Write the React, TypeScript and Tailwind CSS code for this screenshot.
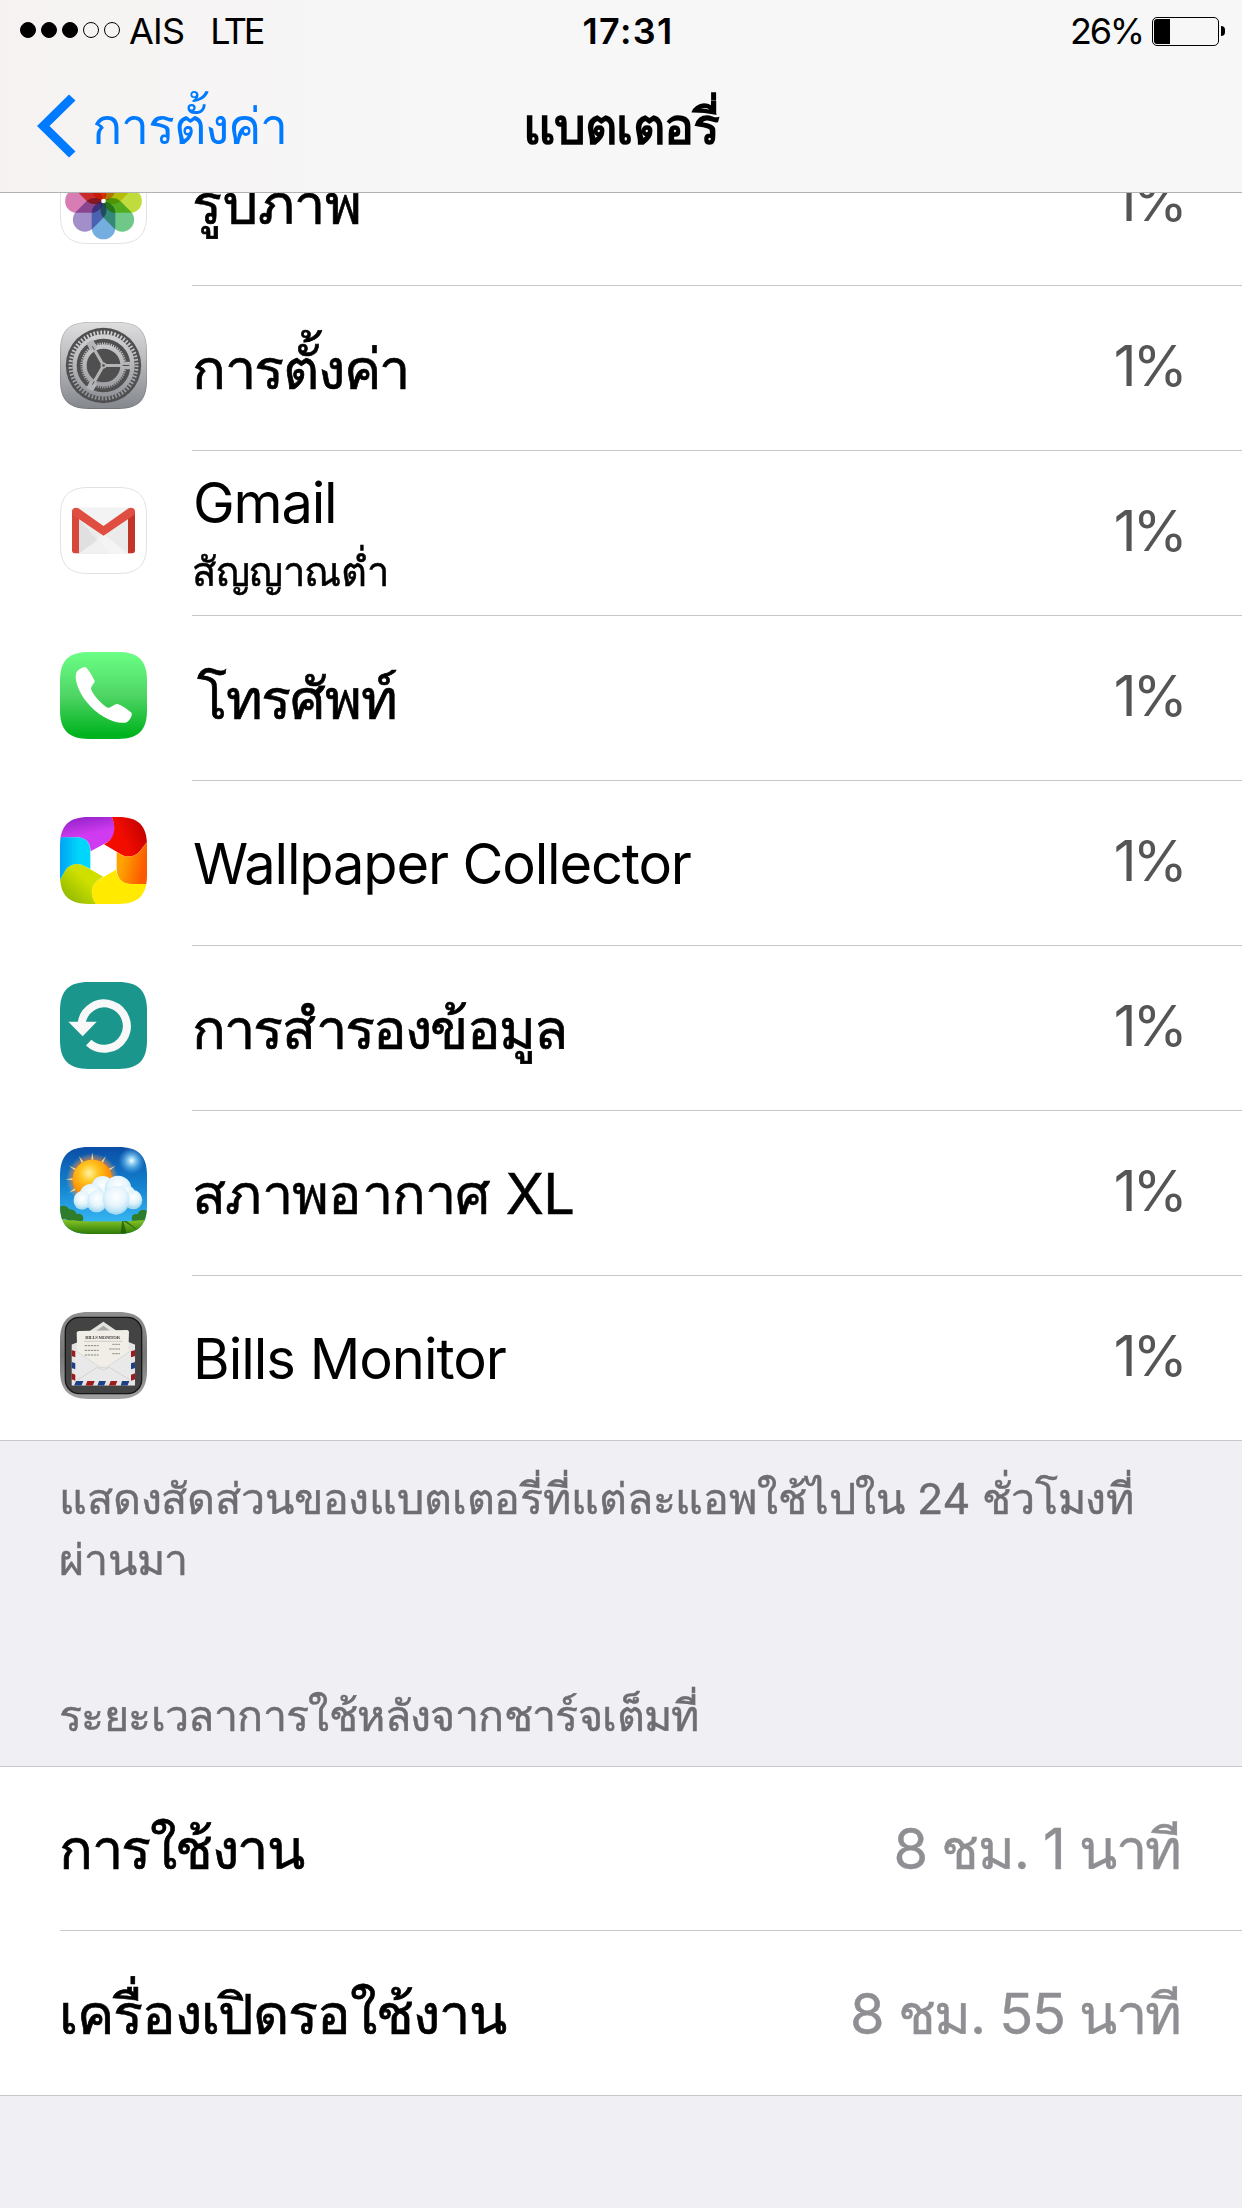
import React from 'react';

interface AppUsage {
  name: string;
  nameClass: string;
  note?: string;
  percent: string;
  icon: React.ReactNode;
}

interface IconProps {
  id: string;
  children: React.ReactNode;
  outlined?: boolean;
}

// Shared rounded app tile, everything inside is clipped to its shape
const AppIcon: React.FC<IconProps> = ({ id, children, outlined }) => (
  <svg className="w-[87px] h-[87px] shrink-0" viewBox="0 0 261 261">
    <clipPath id={`${id}-clip`}>
      <path d="M0 86C0 26 26 0 86 0H175C235 0 261 26 261 86V175C261 235 235 261 175 261H86C26 261 0 235 0 175Z" />
    </clipPath>
    <g clipPath={`url(#${id}-clip)`}>{children}</g>
    {outlined && (
      <path
        d="M1.5 86C1.5 27 27 1.5 86 1.5H175C234 1.5 259.5 27 259.5 86V175C259.5 234 234 259.5 175 259.5H86C27 259.5 1.5 234 1.5 175Z"
        fill="none"
        stroke="#e2e2e2"
        strokeWidth="3"
      />
    )}
  </svg>
);

const PETALS = ['#f9a01e', '#f0dc28', '#bfdc3c', '#6fc788', '#74aee0', '#a28fc9', '#d87db4', '#f0563c'];

const PhotosIcon = () => (
  <AppIcon id="photos" outlined>
    <rect width="261" height="261" fill="#fff" />
    <g style={{ isolation: 'isolate' }}>
      {PETALS.map((color, i) => (
        <rect
          key={color}
          x="95"
          y="17"
          width="71"
          height="113"
          rx="35"
          fill={color}
          transform={`rotate(${i * 45} 130.5 132)`}
          style={{ mixBlendMode: 'multiply' }}
        />
      ))}
    </g>
    <circle cx="130.5" cy="132" r="7" fill="#fff" />
  </AppIcon>
);

const SettingsIcon = () => (
  <AppIcon id="settings">
    <linearGradient id="settings-bg" x1="0" y1="0" x2="0" y2="261" gradientUnits="userSpaceOnUse">
      <stop offset="0" stopColor="#dededf" />
      <stop offset="0.45" stopColor="#b9b9bc" />
      <stop offset="1" stopColor="#83878d" />
    </linearGradient>
    <rect width="261" height="261" fill="url(#settings-bg)" />
    <circle cx="130.5" cy="130.5" r="113" fill="#4f4f50" />
    <g fill="none" stroke="url(#settings-bg)">
      <circle cx="130.5" cy="130.5" r="99" strokeWidth="12" strokeDasharray="5.184 5.184" />
      <circle cx="130.5" cy="130.5" r="87" strokeWidth="13" />
      <circle cx="130.5" cy="130.5" r="66" strokeWidth="6" strokeDasharray="3.456 3.456" />
      <circle cx="130.5" cy="130.5" r="57" strokeWidth="13" />
    </g>
    <g stroke="#b4b4b7" strokeWidth="9">
      <path d="M130.5 130.5H212" />
      <path d="M130.5 130.5L90 60" />
      <path d="M130.5 130.5L90 201" />
    </g>
    <g fill="#b4b4b7">
      <path d="M188 119H214V142H188Z" />
      <path d="M92 87L79 64L99 53L112 76Z" />
      <path d="M92 174L79 197L99 208L112 185Z" />
    </g>
    <path d="M188 130.5H208M97 73L103 83M97 188L103 178" stroke="#4f4f50" strokeWidth="3" />
    <circle cx="130.5" cy="130.5" r="9" fill="#b4b4b7" />
    <circle cx="130.5" cy="130.5" r="4" fill="#4f4f50" />
    <path
      d="M1 86C1 27 27 1 86 1H175C234 1 260 27 260 86V175C260 234 234 260 175 260H86C27 260 1 234 1 175Z"
      fill="none"
      stroke="#000"
      strokeOpacity="0.15"
      strokeWidth="3"
    />
  </AppIcon>
);

const GmailIcon = () => (
  <AppIcon id="gmail" outlined>
    <rect width="261" height="261" fill="#fff" />
    <rect x="50" y="62" width="162" height="138" fill="#ebebeb" />
    <path d="M57 62H204L130.5 118Z" fill="#f3f3f3" />
    <path d="M57 200L130 140L204 200Z" fill="#f4f4f4" />
    <path d="M57 98L150 200H57Z" fill="#d9d9d9" opacity="0.6" />
    <path d="M57 200L118 155L150 200Z" fill="#f1f1f1" />
    <path d="M36 76H57V199H44C39 199 36 196 36 190Z" fill="#d9463a" />
    <path d="M204 76H225V190C225 196 222 199 217 199H204Z" fill="#c1352a" />
    <path d="M36 74C36 62 48 60 55 64L130.5 117L206 64C213 60 225 62 225 74C225 79 223 83 219 86L130.5 146L42 86C38 83 36 79 36 74Z" fill="#e04e42" />
  </AppIcon>
);

const PhoneIcon = () => (
  <AppIcon id="phone">
    <linearGradient id="phone-bg" x1="0" y1="0" x2="0" y2="1">
      <stop offset="0" stopColor="#6bff85" />
      <stop offset="0.5" stopColor="#4fd565" />
      <stop offset="0.95" stopColor="#01b31f" />
    </linearGradient>
    <rect width="261" height="261" fill="url(#phone-bg)" />
    <path
      d="M49 62C54 52 70 44 77 46C86 53 98 74 104 87C105 93 92 102 93 111C98 128 125 157 143 167C150 170 163 155 173 156C186 160 206 174 215 183C218 192 206 211 196 212C160 217 110 188 80 150C54 117 42 80 49 62Z"
      fill="#fff"
    />
  </AppIcon>
);

const WallpaperIcon = () => (
  <AppIcon id="wallpaper">
    <linearGradient id="wp-purple" x1="0" y1="0" x2="0.3" y2="1">
      <stop offset="0" stopColor="#8a1fc4" />
      <stop offset="0.6" stopColor="#d03af0" />
    </linearGradient>
    <linearGradient id="wp-red" x1="0" y1="0.6" x2="1" y2="0.2">
      <stop offset="0.4" stopColor="#f20c00" />
      <stop offset="1" stopColor="#bd0000" />
    </linearGradient>
    <linearGradient id="wp-orange" x1="0" y1="0" x2="1" y2="0.3">
      <stop offset="0.3" stopColor="#ffa200" />
      <stop offset="1" stopColor="#fb5a00" />
    </linearGradient>
    <linearGradient id="wp-green" x1="1" y1="0" x2="0" y2="1">
      <stop offset="0.4" stopColor="#cfe000" />
      <stop offset="1" stopColor="#7fae00" />
    </linearGradient>
    <linearGradient id="wp-blue" x1="0" y1="0" x2="1" y2="0">
      <stop offset="0" stopColor="#00a2f2" />
      <stop offset="0.6" stopColor="#00d5fb" />
    </linearGradient>
    <rect width="261" height="261" fill="#fff" />
    <path d="M0 62V0H155C170 32 168 62 138 78L92 103C91 75 76 61 50 61Z" fill="url(#wp-purple)" />
    <path d="M155 0H261V75L240 102C226 120 200 123 185 113L132 82C166 66 169 30 155 0Z" fill="url(#wp-red)" />
    <path d="M261 75V201H215C184 201 170 182 170 155V105L185 113C200 123 226 120 240 102Z" fill="url(#wp-orange)" />
    <path d="M261 201V261H108C92 240 90 210 110 192L168 158C171 184 186 201 215 201Z" fill="#ffea00" />
    <path d="M0 188V261H108C92 240 90 210 110 192L130 179L75 148C55 136 28 140 15 162Z" fill="url(#wp-green)" />
    <path d="M0 61H50C76 61 91 76 91 102V156L75 148C55 136 28 140 15 162L0 188Z" fill="url(#wp-blue)" />
  </AppIcon>
);

const BackupIcon = () => (
  <AppIcon id="backup">
    <rect width="261" height="261" fill="#1b968c" />
    <path d="M65 124A68 68 0 1 1 86 182" fill="none" stroke="#f8f8f8" strokeWidth="24" />
    <path d="M25 119H110L68 163Z" fill="#f8f8f8" />
  </AppIcon>
);

const RAYS = [0, 30, 60, 90, 120, 150, 180, 210, 240, 270, 300, 330];

const WeatherIcon = () => (
  <AppIcon id="weather">
    <linearGradient id="weather-sky" x1="0" y1="0" x2="0" y2="1">
      <stop offset="0" stopColor="#0b4da6" />
      <stop offset="0.45" stopColor="#1383d0" />
      <stop offset="0.85" stopColor="#35b4f0" />
    </linearGradient>
    <radialGradient id="weather-sun" cx="0.42" cy="0.34" r="0.65">
      <stop offset="0" stopColor="#fff3a0" />
      <stop offset="0.35" stopColor="#ffc521" />
      <stop offset="0.85" stopColor="#ff8a00" />
      <stop offset="1" stopColor="#ffe000" />
    </radialGradient>
    <radialGradient id="weather-halo">
      <stop offset="0.65" stopColor="#ff7a1a" stopOpacity="0.9" />
      <stop offset="1" stopColor="#ffb060" stopOpacity="0" />
    </radialGradient>
    <radialGradient id="weather-star">
      <stop offset="0" stopColor="#fff" />
      <stop offset="0.3" stopColor="#a5e4ff" stopOpacity="0.8" />
      <stop offset="1" stopColor="#4db4f0" stopOpacity="0" />
    </radialGradient>
    <radialGradient id="weather-puff" cx="0.5" cy="0.4" r="0.6">
      <stop offset="0" stopColor="#fff" />
      <stop offset="0.6" stopColor="#e6f5fc" />
      <stop offset="1" stopColor="#b5e2f6" />
    </radialGradient>
    <linearGradient id="weather-grass" x1="0" y1="0" x2="0" y2="1">
      <stop offset="0" stopColor="#8cc92a" />
      <stop offset="1" stopColor="#2c7a06" />
    </linearGradient>
    <rect width="261" height="261" fill="url(#weather-sky)" />
    <circle cx="215" cy="41" r="40" fill="url(#weather-star)" />
    <circle cx="97" cy="97" r="78" fill="url(#weather-halo)" />
    {RAYS.map(a => (
      <path key={a} d="M94 38L97 16L100 38Z" fill="#ffd98a" transform={`rotate(${a} 97 97)`} />
    ))}
    <circle cx="97" cy="97" r="59" fill="url(#weather-sun)" />
    <g fill="#2f7d2a">
      <circle cx="10" cy="196" r="20" />
      <circle cx="32" cy="205" r="18" />
      <circle cx="56" cy="214" r="14" />
      <circle cx="250" cy="206" r="18" />
      <circle cx="228" cy="214" r="13" />
    </g>
    <path d="M0 216C60 226 180 226 261 218V261H0Z" fill="url(#weather-grass)" />
    <path d="M186 222L182 261H200L190 222L240 255L200 222Z" fill="#1d5204" opacity="0.7" />
    <g fill="#a9dbf2">
      <circle cx="66" cy="163" r="25" />
      <circle cx="110" cy="166" r="30" />
      <circle cx="168" cy="164" r="39" />
      <circle cx="220" cy="160" r="27" />
    </g>
    <g fill="url(#weather-puff)">
      <circle cx="128" cy="121" r="34" />
      <circle cx="174" cy="126" r="40" />
      <circle cx="94" cy="146" r="36" />
      <circle cx="196" cy="146" r="32" />
      <circle cx="66" cy="158" r="25" />
      <circle cx="112" cy="160" r="30" />
      <circle cx="220" cy="155" r="25" />
      <circle cx="168" cy="156" r="40" />
    </g>
  </AppIcon>
);

const BillsIcon = () => (
  <AppIcon id="bills">
    <linearGradient id="bills-frame" x1="0" y1="0" x2="0" y2="1">
      <stop offset="0" stopColor="#8e8e8e" />
      <stop offset="0.5" stopColor="#777" />
      <stop offset="1" stopColor="#a2a2a2" />
    </linearGradient>
    <clipPath id="bills-envelope">
      <path d="M34 98L60 88H200L226 98V221H34Z" />
    </clipPath>
    <rect width="261" height="261" fill="url(#bills-frame)" />
    <rect x="16" y="16" width="229" height="229" rx="42" fill="#434343" stroke="#151515" strokeWidth="4" />
    <path d="M130 29L172 58V80H88V58Z" fill="#e4e2de" />
    <path d="M130 41L156 60H104Z" fill="#a8a8a6" />
    <g clipPath="url(#bills-envelope)">
      <rect x="34" y="85" width="192" height="137" fill="#e4e4e4" />
      <g fill="#9c1c1c">
        <path d="M34 114L47 118V136L34 132ZM34 184L47 188V206L34 202ZM213 118L226 114V132L213 136ZM213 188L226 184V202L213 206Z" />
        <path d="M82 207H104L98 222H76ZM152 207H172L166 222H146Z" />
      </g>
      <g fill="#1f3f86">
        <path d="M34 150L47 154V172L34 168ZM213 154L226 150V168L213 172Z" />
        <path d="M48 207H70L64 222H42ZM117 207H138L132 222H112ZM186 207H208L202 222H182Z" />
      </g>
      <rect x="47" y="118" width="166" height="88" fill="#ededed" />
    </g>
    <path d="M47 116L60 108H200L213 116V206H47Z" fill="#e9e9e9" />
    <path d="M50 64C50 59 53 57 58 57L201 54C205 54 207 57 207 61L205 121L140 166H120L52 121Z" fill="#f1eee7" />
    <text x="128" y="80" textAnchor="middle" fontSize="14" fontWeight="700" textLength="104" fill="#444" className="font-['Liberation_Serif']">
      BILLS MONITOR
    </text>
    <g stroke="#8a8884" strokeWidth="3">
      <path d="M72 88H188" strokeWidth="1" />
      <path d="M74 101H116M157 97H180M74 115H116M148 111H180M74 129H116M157 125H180" strokeDasharray="7 2" />
    </g>
    <path d="M47 116L120 166H140L213 116" fill="none" stroke="#cfcfcf" strokeWidth="2" />
    <path d="M52 204L112 166L130 174L148 166L210 204" fill="none" stroke="#c9c9c9" strokeWidth="2" />
  </AppIcon>
);

const APPS: AppUsage[] = [
  { name: 'รูปภาพ', nameClass: 'tracking-[-0.2px] [-webkit-text-stroke:0.7px]', percent: '1%', icon: <PhotosIcon /> },
  { name: 'การตั้งค่า', nameClass: 'tracking-[-1.3px] [-webkit-text-stroke:0.7px]', percent: '1%', icon: <SettingsIcon /> },
  { name: 'Gmail', nameClass: 'pl-px tracking-[-1.2px]', note: 'สัญญาณต่ำ', percent: '1%', icon: <GmailIcon /> },
  { name: 'โทรศัพท์', nameClass: 'pl-[5px] tracking-[-1.3px] [-webkit-text-stroke:0.7px]', percent: '1%', icon: <PhoneIcon /> },
  { name: 'Wallpaper Collector', nameClass: 'pl-px tracking-[-1.15px]', percent: '1%', icon: <WallpaperIcon /> },
  { name: 'การสำรองข้อมูล', nameClass: 'tracking-[-1.8px] [-webkit-text-stroke:0.7px]', percent: '1%', icon: <BackupIcon /> },
  { name: 'สภาพอากาศ XL', nameClass: 'tracking-[-0.7px] [-webkit-text-stroke:0.5px]', percent: '1%', icon: <WeatherIcon /> },
  { name: 'Bills Monitor', nameClass: 'pl-px tracking-[-1px]', percent: '1%', icon: <BillsIcon /> },
];

const StatusBar = () => (
  <div className="grid grid-cols-[1fr_auto_1fr] items-center h-[62px] text-[36px] leading-[44px]">
    <div className="flex items-center pl-5">
      <div className="flex gap-[5px] -mt-[2px]">
        {[true, true, true, false, false].map((on, i) => (
          <span key={i} className={`w-4 h-4 rounded-full border border-black ${on ? 'bg-black' : ''}`} />
        ))}
      </div>
      <span className="ml-[9px] tracking-[-0.8px]">AIS</span>
      <span className="ml-[26px] tracking-[-3.3px]">LTE</span>
    </div>
    <span className="font-semibold tracking-[1.3px] pl-[14px]">17:31</span>
    <div className="flex items-center justify-end pr-[17px]">
      <span className="tracking-[-2.2px] mr-[9px]">26%</span>
      <div className="w-[67px] h-[29px] rounded-[5px] border border-black p-px">
        <div className="w-[16px] h-full bg-black rounded-l-[3px]" />
      </div>
      <div className="w-1 h-[10px] ml-[2px] bg-black rounded-r-full" />
    </div>
  </div>
);

const NavBar = () => (
  <div className="grid grid-cols-[1fr_auto_1fr] items-center h-[128px] text-[50px] leading-[60px]">
    <button type="button" className="flex items-center pl-[37px] text-[#007aff]">
      <svg className="w-[39px] h-[64px]" viewBox="0 0 39 64">
        <path d="M0 32L32 0.5L38.5 6.5L12.5 32L38.5 57.5L32 63.5Z" fill="currentColor" />
      </svg>
      <span className="ml-[16px] pb-px tracking-[-1px]">การตั้งค่า</span>
    </button>
    <h1 className="pb-px font-semibold tracking-[-0.9px]">แบตเตอรี่</h1>
  </div>
);

const AppRow: React.FC<{ app: AppUsage; last: boolean }> = ({ app, last }) => (
  <li className={`flex h-[165px] pl-[60px] ${last ? 'border-b border-[#c8c7cc]' : ''}`}>
    <div className="pt-9 w-[132px] shrink-0">{app.icon}</div>
    <div className={`flex-1 flex items-center justify-between pr-[58px] ${last ? '' : 'border-b border-[#c8c7cc]'}`}>
      <div className="flex flex-col pt-px">
        <span className={`text-[56px] ${app.note ? 'leading-[74px] pt-[3px]' : 'leading-[80px]'} ${app.nameClass}`}>
          {app.name}
        </span>
        {app.note && (
          <span className="text-[40px] leading-[64px] tracking-[-0.4px] [-webkit-text-stroke:0.5px]">{app.note}</span>
        )}
      </div>
      <span className="pb-[4px] text-[56px] leading-[80px] tracking-[-3.8px] text-[#555]">{app.percent}</span>
    </div>
  </li>
);

export default function App() {
  return (
    <div className="w-[1242px] h-[2208px] overflow-hidden bg-[#efeff4] text-black font-['Inter','Noto_Sans',sans-serif]">
      <header className="relative z-10 h-[193px] border-b border-[#b2b2b2] bg-linear-to-r from-[#f6f2f2] via-[#f7f7f7] via-35% to-[#f7f7f7]">
        <StatusBar />
        <NavBar />
      </header>

      {/* The list is scrolled, its first row is partly under the header */}
      <ul className="-mt-[72px] bg-white">
        {APPS.map((app, i) => (
          <AppRow key={app.name} app={app} last={i === APPS.length - 1} />
        ))}
      </ul>

      <div className="flex flex-col justify-between h-[325px] pt-[27px] pb-[20px] pl-[59px] text-[43px] leading-[61px] text-[#6d6d72] [-webkit-text-stroke:0.5px]">
        <p className="whitespace-nowrap tracking-[-0.15px]">
          แสดงสัดส่วนของแบตเตอรี่ที่แต่ละแอพใช้ไปใน 24 ชั่วโมงที่
          <br />
          ผ่านมา
        </p>
        <h2 className="whitespace-nowrap tracking-[-0.6px]">ระยะเวลาการใช้หลังจากชาร์จเต็มที่</h2>
      </div>

      <div className="bg-white border-y border-[#c8c7cc] pl-[59px] text-[56px] leading-[80px]">
        <div className="ml-px flex items-center justify-between h-[164px] pr-[61px] border-b border-[#c8c7cc]">
          <span className="-ml-px tracking-[-1.5px] [-webkit-text-stroke:0.7px]">การใช้งาน</span>
          <span className="tracking-[-1.3px] text-[#8e8e93] [-webkit-text-stroke:0.4px]">8 ชม. 1 นาที</span>
        </div>
        <div className="flex items-center justify-between h-[164px] pt-px pr-[61px]">
          <span className="tracking-[-1.1px] [-webkit-text-stroke:0.7px]">เครื่องเปิดรอใช้งาน</span>
          <span className="tracking-[-1.35px] text-[#8e8e93] [-webkit-text-stroke:0.4px]">8 ชม. 55 นาที</span>
        </div>
      </div>
    </div>
  );
}
